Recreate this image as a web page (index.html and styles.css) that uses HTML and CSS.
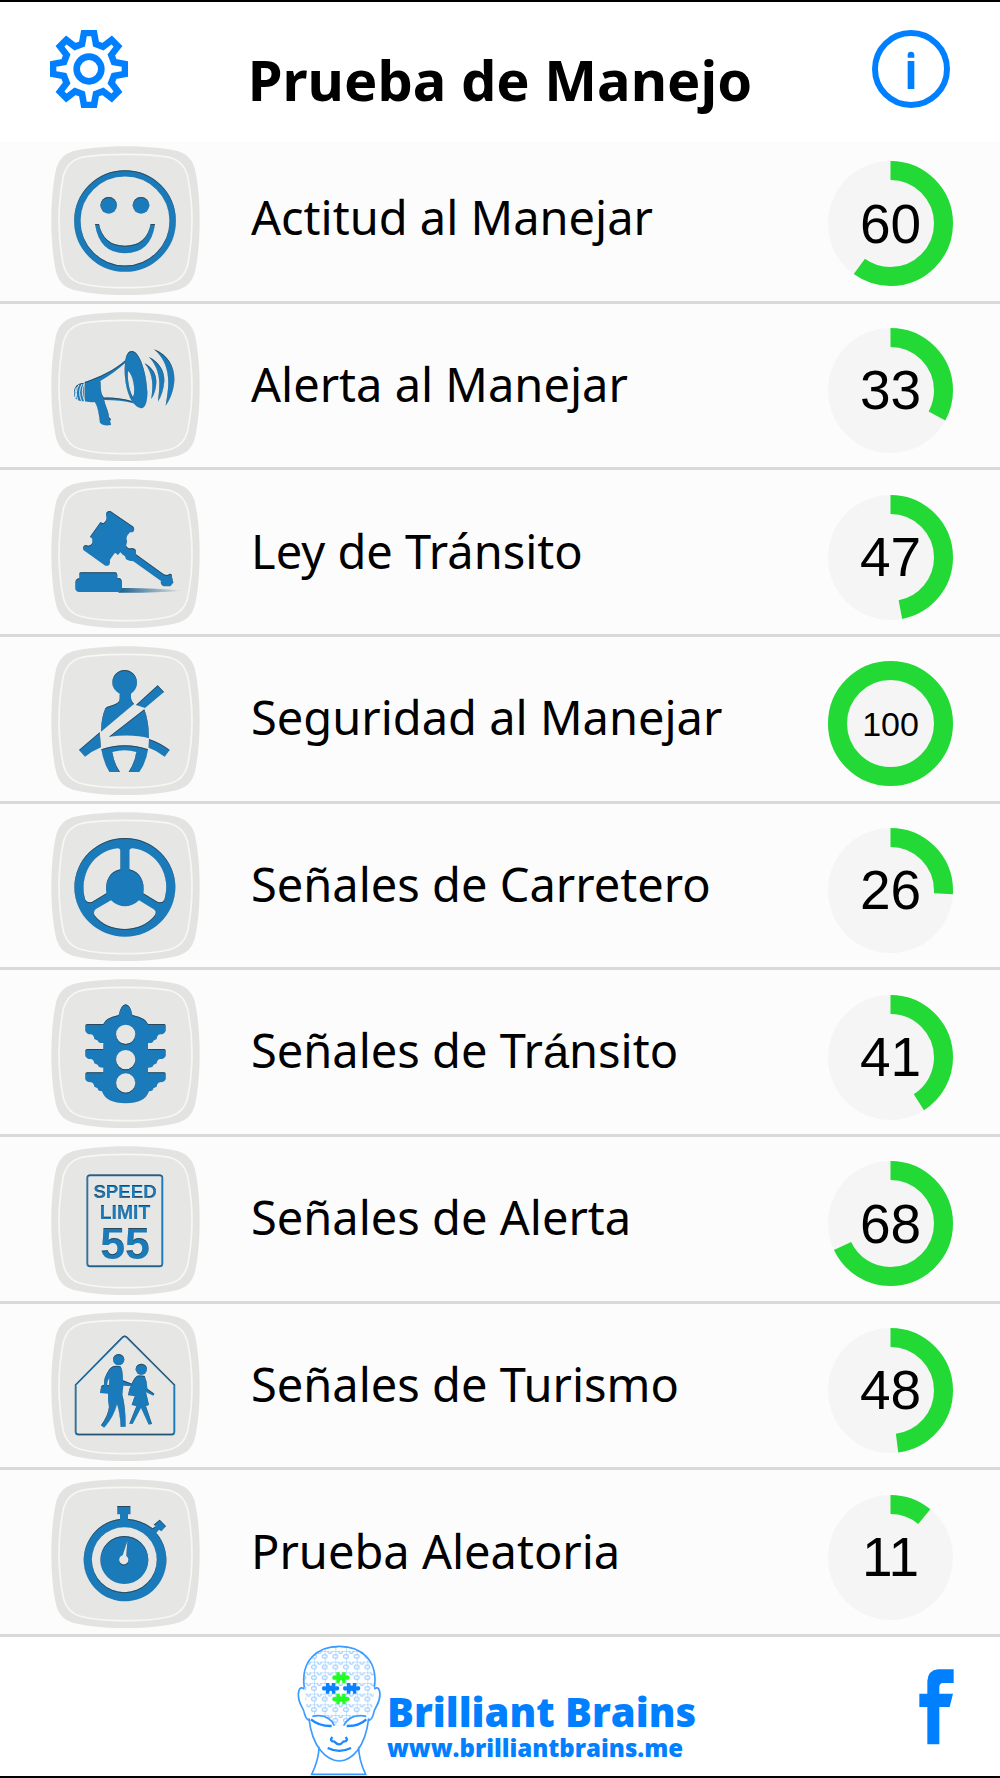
FILE: index.html
```html
<!DOCTYPE html>
<html lang="es">
<head>
<meta charset="utf-8">
<meta name="viewport" content="width=device-width, initial-scale=1">
<title>Prueba de Manejo</title>
<link rel="stylesheet" href="styles.css">
</head>
<body>
<svg class="defs" aria-hidden="true">
  <defs>
    <symbol id="tile" viewBox="0 0 447 447">
      <path fill="#e3e3e2" d="M224 1C290 1 350 8 382 16Q420 28 431 66C441 110 446 165 446 224C446 283 441 338 431 381Q420 420 382 431C350 440 290 447 224 447C158 447 98 440 65 431Q27 420 16 381C6 338 1 283 1 224C1 165 6 110 16 66Q27 28 65 16C98 8 158 1 224 1Z"/>
      <path fill="#e6e6e5" stroke="#f7f7f6" stroke-width="5" d="M224 25C285 25 335 29 362 36Q397 48 409 86C418 130 423 175 423 224C423 273 418 318 409 361Q397 400 362 411C335 419 285 425 224 425C162 425 112 419 85 411Q50 400 38 361C29 318 24 273 24 224C24 175 29 130 38 86Q50 48 85 36C112 29 162 25 224 25Z"/>
    </symbol>
    <filter id="engrave" x="-5%" y="-5%" width="110%" height="110%" color-interpolation-filters="sRGB">
      <feOffset in="SourceAlpha" dx="0" dy="3" result="o"/>
      <feGaussianBlur in="o" stdDeviation="2" result="b"/>
      <feComposite in="SourceAlpha" in2="b" operator="out" result="edge"/>
      <feFlood flood-color="#33342f" flood-opacity="0.7"/>
      <feComposite in2="edge" operator="in" result="dark"/>
      <feMerge><feMergeNode in="SourceGraphic"/><feMergeNode in="dark"/></feMerge>
    </filter>
    <pattern id="puzzle" x="165" y="92" width="32" height="32" patternUnits="userSpaceOnUse">
      <path fill="none" stroke="#8cc4ff" stroke-width="3" d="M0 0H12Q9 7 16 7Q23 7 20 0H32M0 0V12Q7 9 7 16Q7 23 0 20V32M32 12Q25 9 25 16Q25 23 32 20"/>
    </pattern>
    <path id="piece" d="M-14 -16H-4V-10Q0 -4 4 -10V-16H14V-5Q26 -9 26 0Q26 9 14 5V16H4V10Q0 4 -4 10V16H-14V5Q-26 9 -26 0Q-26 -9 -14 -5Z"/>
  </defs>
</svg>

<header class="top">
  <button class="icon-button" type="button" aria-label="Ajustes">
    <svg viewBox="-117 -117 234 234" fill="none" stroke="currentColor" stroke-width="20">
      <path d="M-15 -108H15L21 -75L42 -67L68 -87L87 -68L67 -42L75 -21L108 -15V15L75 21L67 42L87 68L68 87L42 67L21 75L15 108H-15L-21 75L-42 67L-68 87L-87 68L-67 42L-75 21L-108 15V-15L-75 -21L-67 -42L-87 -68L-68 -87L-42 -67L-21 -75Z"/>
      <circle r="37"/>
    </svg>
  </button>
  <h1 class="title">Prueba de Manejo</h1>
  <button class="icon-button" type="button" aria-label="Información">
    <svg viewBox="-117 -117 234 234">
      <circle r="108" fill="none" stroke="currentColor" stroke-width="18"/>
      <path fill="currentColor" d="M-10 -24H10V60H-10ZM-10 -34V-42Q-10 -52 0 -52Q10 -52 10 -42V-34Z"/>
    </svg>
  </button>
</header>

<main class="main">
<ul class="topics">
  <li><a class="topic" href="#actitud">
    <svg class="tile" viewBox="153 437 447 447" aria-hidden="true">
      <use href="#tile" x="153" y="437" width="447" height="447"/>
      <g class="ink">
        <circle cx="375" cy="662" r="143" fill="none" stroke="#1b7ab9" stroke-width="19"/>
        <circle cx="326" cy="615" r="25"/><circle cx="423" cy="615" r="25"/>
        <path d="M285 671H297Q310 736 375 736Q440 736 452 671H465Q453 759 375 759Q298 759 285 671Z"/>
      </g>
    </svg>
    <span class="name">Actitud al Manejar</span>
    <span class="score"><svg viewBox="0 0 125 125" aria-hidden="true"><circle class="disc" cx="62.5" cy="62.5" r="62.5"/><circle class="arc" cx="62.5" cy="62.5" r="53" pathLength="100" stroke-dasharray="60 100"/></svg><span>60</span></span>
  </a></li>

  <li><a class="topic" href="#alerta">
    <svg class="tile" viewBox="33 36 447 447" aria-hidden="true">
      <use href="#tile" x="33" y="36" width="447" height="447"/>
      <g class="ink">
        <path fill-rule="evenodd" d="M134 246C175 233 225 210 256 181C259 163 265 153 277 153C300 156 320 220 322 277C322 306 316 326 303 325C294 324 286 316 280 310C255 303 225 300 193 300C196 320 206 333 207 352L213 358L210 364L213 375C199 378 186 376 180 368C177 345 174 320 164 306C150 308 138 305 134 303ZM181 243C184 262 180 281 192 293C222 292 250 296 275 303C259 276 251 228 255 190C233 210 207 228 181 243ZM264 213C262 240 267 270 279 292C288 275 280 225 264 213Z"/>
        <path d="M131 249C112 250 102 261 102 279C102 296 112 304 131 304Z"/>
        <path d="M342 148C385 164 404 202 403 240C402 270 391 298 377 317C390 250 392 192 342 148Z"/>
        <path d="M327 171C358 186 374 213 373 243C371 268 365 288 354 305C361 252 363 212 327 171Z"/>
        <path d="M314 190C338 203 350 224 349 248C348 268 343 284 334 297C339 258 341 225 314 190Z"/>
      </g>
      <path fill="none" stroke="#dfe6e9" stroke-width="3" d="M126 252Q112 276 125 304M117 254Q103 276 114 302M109 262Q103 276 107 294M133 250Q120 275 134 303"/>
    </svg>
    <span class="name">Alerta al Manejar</span>
    <span class="score"><svg viewBox="0 0 125 125" aria-hidden="true"><circle class="disc" cx="62.5" cy="62.5" r="62.5"/><circle class="arc" cx="62.5" cy="62.5" r="53" pathLength="100" stroke-dasharray="33 100"/></svg><span>33</span></span>
  </a></li>

  <li><a class="topic" href="#ley">
    <svg class="tile" viewBox="33 536 447 447" aria-hidden="true">
      <defs><linearGradient id="shade"><stop stop-color="#1b5f8b"/><stop offset="1" stop-color="#1b5f8b" stop-opacity="0"/></linearGradient></defs>
      <use href="#tile" x="33" y="536" width="447" height="447"/>
      <path fill="url(#shade)" d="M240 863Q340 862 430 871Q340 878 235 877Z"/>
      <g class="ink">
        <path d="M198 645Q197 632 211 632L280 679Q286 689 278 696H270Q254 712 261 724L258 736Q264 746 273 744Q288 742 288 755V762L367 819Q378 828 390 820Q397 821 396 831L400 847L391 858H370Q360 852 363 842L280 783Q268 783 258 777Q256 765 249 764L241 756L234 764L225 757L215 771Q207 779 210 787Q207 799 196 796L130 749Q126 738 137 734Q150 740 157 728V716L150 709L181 666L190 669Q203 661 198 645Z"/>
        <path d="M118 820Q118 816 124 816H226Q232 816 232 824V834H240Q246 838 246 846V864Q243 875 234 875H116Q106 873 106 862V845Q108 835 118 834Z"/>
      </g>
    </svg>
    <span class="name">Ley de Tránsito</span>
    <span class="score"><svg viewBox="0 0 125 125" aria-hidden="true"><circle class="disc" cx="62.5" cy="62.5" r="62.5"/><circle class="arc" cx="62.5" cy="62.5" r="53" pathLength="100" stroke-dasharray="47 100"/></svg><span>47</span></span>
  </a></li>

  <li><a class="topic" href="#seguridad">
    <svg class="tile" viewBox="33 32 447 447" aria-hidden="true">
      <use href="#tile" x="33" y="32" width="447" height="447"/>
      <g class="ink">
        <path d="M254 104C275 104 291 121 291 142C291 158 283 167 273 175V189Q274 199 282 206L183 289Q183 250 196 219Q200 213 212 211Q240 205 239 189V175C227 167 217 158 217 142C217 121 233 104 254 104Z"/>
        <path d="M353 150L372 170L315 218L288 209Z"/>
        <path d="M313 222Q327 260 327 309Q280 295 207 304Z"/>
        <path d="M179 291L183 336Q155 348 135 364L117 344Z"/>
        <path d="M327 311Q360 322 389 344L374 364Q350 345 326 337Z"/>
        <path d="M184 342Q254 318 324 342Q319 380 298 410H266Q285 380 289 350Q254 339 217 350Q222 385 240 410H208Q190 380 184 342Z"/>
      </g>
    </svg>
    <span class="name">Seguridad al Manejar</span>
    <span class="score full"><svg viewBox="0 0 125 125" aria-hidden="true"><circle class="disc" cx="62.5" cy="62.5" r="62.5"/><circle class="arc" cx="62.5" cy="62.5" r="53"/></svg><span>100</span></span>
  </a></li>

  <li><a class="topic" href="#carretero">
    <svg class="tile" viewBox="33 531 447 447" aria-hidden="true">
      <use href="#tile" x="33" y="531" width="447" height="447"/>
      <g class="ink">
        <path fill-rule="evenodd" d="M255 609A151 148 0 0 1 406 757A151 148 0 0 1 255 905A151 148 0 0 1 103 757A151 148 0 0 1 255 609ZM233 640Q241 640 241 650V703C207 709 194 742 199 775L157 800Q144 806 136 795C115 725 157 648 233 640ZM278 640C352 648 396 725 373 795Q366 806 352 800L310 775C316 742 300 709 268 703V650Q268 640 278 640ZM213 796C239 820 271 820 297 796L340 822Q351 830 345 840C305 896 203 896 163 840Q159 830 168 822Z"/>
      </g>
    </svg>
    <span class="name">Señales de Carretero</span>
    <span class="score"><svg viewBox="0 0 125 125" aria-hidden="true"><circle class="disc" cx="62.5" cy="62.5" r="62.5"/><circle class="arc" cx="62.5" cy="62.5" r="53" pathLength="100" stroke-dasharray="26 100"/></svg><span>26</span></span>
  </a></li>

  <li><a class="topic" href="#transito">
    <svg class="tile" viewBox="33 26 447 447" aria-hidden="true">
      <use href="#tile" x="33" y="26" width="447" height="447"/>
      <g class="ink">
        <path fill-rule="evenodd" d="M257 102Q272 104 277 134Q316 142 324 161H372Q377 161 377 167V181Q374 192 360 192Q351 194 350 206L340 211Q340 219 324 218V236H372Q377 236 377 242V256Q374 266 360 266Q351 268 350 279L340 284Q340 292 324 292V306H372Q377 306 377 312V326Q374 336 360 336Q351 338 350 349L340 354Q340 363 327 363Q315 399 257 399Q198 399 186 363Q173 363 173 354L163 349Q162 338 153 336Q139 336 136 326V312Q136 306 142 306H190V292Q174 292 174 284L163 279Q162 268 153 266Q139 266 136 256V242Q136 236 142 236H190V218Q174 219 174 211L163 206Q162 194 153 192Q139 192 136 181V167Q136 161 142 161H190Q198 142 236 134Q242 104 257 102ZM257 163A29 29 0 0 0 257 221A29 29 0 0 0 257 163ZM257 239A29 29 0 0 0 257 297A29 29 0 0 0 257 239ZM257 309A29 29 0 0 0 257 367A29 29 0 0 0 257 309Z"/>
      </g>
    </svg>
    <span class="name">Señales de Tr<span class="accent">á</span>nsito</span>
    <span class="score"><svg viewBox="0 0 125 125" aria-hidden="true"><circle class="disc" cx="62.5" cy="62.5" r="62.5"/><circle class="arc" cx="62.5" cy="62.5" r="53" pathLength="100" stroke-dasharray="41 100"/></svg><span>41</span></span>
  </a></li>

  <li><a class="topic" href="#senales-alerta">
    <svg class="tile" viewBox="33 526 447 447" aria-hidden="true">
      <use href="#tile" x="33" y="526" width="447" height="447"/>
      <g class="ink">
        <rect x="142" y="614" width="225" height="273" rx="8" fill="none" stroke="#1b7ab9" stroke-width="5"/>
        <g class="sign" text-anchor="middle">
          <text x="255" y="682" font-size="56">SPEED</text>
          <text x="255" y="746" font-size="58">LIMIT</text>
          <text x="255" y="865" font-size="134">55</text>
        </g>
      </g>
    </svg>
    <span class="name">Señales de Alerta</span>
    <span class="score"><svg viewBox="0 0 125 125" aria-hidden="true"><circle class="disc" cx="62.5" cy="62.5" r="62.5"/><circle class="arc" cx="62.5" cy="62.5" r="53" pathLength="100" stroke-dasharray="68 100"/></svg><span>68</span></span>
  </a></li>

  <li><a class="topic" href="#turismo">
    <svg class="tile" viewBox="33 37 447 447" aria-hidden="true">
      <use href="#tile" x="33" y="37" width="447" height="447"/>
      <g class="ink">
        <path fill="none" stroke="#1b7ab9" stroke-width="5" d="M107 256L247 114Q254 106 261 114L403 256V397Q403 405 395 405H116Q107 405 107 397Z"/>
        <circle cx="236" cy="180" r="17"/>
        <path d="M223 199Q232 197 241 200Q248 206 249 242L276 252V260L250 258L247 285Q257 320 257 381L242 382Q240 340 231 314Q222 350 197 379L192 384L183 377Q204 348 207 322Q203 305 204 282L180 280L184 259L192 255Q190 236 206 212Q212 201 223 199ZM208 236Q200 246 201 255L207 257Z"/>
        <circle cx="304" cy="209" r="17"/>
        <path d="M292 228Q302 225 314 229Q321 244 322 267L343 282L340 288L318 278L327 316L318 320L336 373L326 375L303 325L278 373L268 372L289 320L275 316L284 290L264 287L268 269L272 259Q281 234 292 228Z"/>
      </g>
    </svg>
    <span class="name">Señales de Turismo</span>
    <span class="score"><svg viewBox="0 0 125 125" aria-hidden="true"><circle class="disc" cx="62.5" cy="62.5" r="62.5"/><circle class="arc" cx="62.5" cy="62.5" r="53" pathLength="100" stroke-dasharray="48 100"/></svg><span>48</span></span>
  </a></li>

  <li><a class="topic" href="#aleatoria">
    <svg class="tile" viewBox="33 537 447 447" aria-hidden="true">
      <use href="#tile" x="33" y="537" width="447" height="447"/>
      <g class="ink">
        <path fill-rule="evenodd" d="M232 618H271V643H264V657Q305 660 338 685L347 679L341 674L359 659L378 679L364 694L357 689L349 699A124 124 0 1 1 240 657V643H232ZM253 682A97 97 0 0 0 253 877A97 97 0 0 0 253 682Z"/>
        <path fill-rule="evenodd" d="M253 708A71 71 0 0 1 253 852A71 71 0 0 1 253 708ZM262 724L248 766A14 14 0 1 0 259 768Z"/>
      </g>
    </svg>
    <span class="name">Prueba Aleatoria</span>
    <span class="score"><svg viewBox="0 0 125 125" aria-hidden="true"><circle class="disc" cx="62.5" cy="62.5" r="62.5"/><circle class="arc" cx="62.5" cy="62.5" r="53" pathLength="100" stroke-dasharray="11 100"/></svg><span>11</span></span>
  </a></li>
</ul>
</main>

<footer class="bottom">
  <a class="brand" href="#brilliantbrains">
    <svg class="head" viewBox="50 42 252 393" fill="none" stroke="#3b9bff" stroke-width="5" aria-hidden="true">
      <path fill="url(#puzzle)" stroke="none" d="M72 170C60 90 110 46 177 46C245 46 294 90 282 170L275 250Q220 250 190 284H165Q135 250 80 250Z"/>
      <path d="M72 170C60 90 110 46 177 46C245 46 294 90 282 170M72 174Q56 162 54 190C54 225 70 225 73 250Q78 266 86 268M282 174Q297 162 299 190C298 225 282 225 279 250Q275 266 265 268M86 262C95 350 140 389 177 390C214 389 255 350 265 262M116 347C116 380 106 405 94 430H256C244 405 235 380 235 347M96 256Q145 246 162 284M258 256Q210 246 190 284"/>
      <path stroke-width="7" stroke="#1a8aff" d="M92 265Q116 286 154 285M258 265Q236 286 199 285M156 318Q146 330 162 332Q177 348 189 332Q206 330 196 318M142 351Q177 368 212 351"/>
      <g stroke="none"><use href="#piece" x="182" y="140" fill="#1fff1f"/><use href="#piece" x="182" y="204" fill="#1fff1f"/><use href="#piece" x="151" y="172" fill="#0a80ff"/><use href="#piece" x="214" y="172" fill="#0a80ff"/></g>
    </svg>
    <span class="brand-text"><strong>Brilliant Brains</strong><span>www.brilliantbrains.me</span></span>
  </a>
  <a class="facebook" href="#facebook" aria-label="Facebook">
    <svg viewBox="358 568 105 228" aria-hidden="true"><path fill="currentColor" d="M462 569V610H430Q419 611 419 622V642H460L450 682H419V794H383V682H359V642H383V604Q385 572 415 569Z"/></svg>
  </a>
</footer>
</body>
</html>
```
FILE: styles.css
```css
* {
  box-sizing: border-box;
}

body {
  margin: 0;
  min-height: 100vh;
  display: flex;
  flex-direction: column;
  background: #fff;
  color: #000;
  font-family: "Noto Sans", "Open Sans", sans-serif;
}

a {
  color: inherit;
  text-decoration: none;
}

svg {
  display: block;
}

.defs {
  position: absolute;
  width: 0;
  height: 0;
}

.top {
  height: 137px;
  padding: 28px 50px 0;
  border-top: 2px solid #000;
  display: flex;
  justify-content: space-between;
  align-items: flex-start;
}

.icon-button {
  width: 78px;
  height: 78px;
  padding: 0;
  border: 0;
  background: none;
  color: #0080ff;
  cursor: pointer;
}

.title {
  margin: 9px 0 0;
  font-size: 56px;
  line-height: 80px;
  font-weight: 700;
}

.main {
  flex: 1;
  display: flex;
}

.topics {
  flex: 1;
  margin: 0;
  padding: 0;
  list-style: none;
  display: grid;
  grid-auto-rows: 1fr;
  background: linear-gradient(#fff 5px, #fcfcfc 5px);
}

.topics li {
  display: grid;
}

.topic {
  display: flex;
  align-items: center;
  padding: 3px 47px 0 51px;
  border-bottom: 3px solid #d9d9d9;
}

.tile {
  width: 149px;
  height: 149px;
  flex: none;
}

.ink {
  fill: #1b7ab9;
  filter: url(#engrave);
}

.sign {
  font-family: "Liberation Sans", Arial, sans-serif;
  font-weight: 700;
}

.name {
  flex: 1;
  padding: 0 0 6px 51px;
  font-size: 47px;
  line-height: 64px;
  white-space: nowrap;
}

.accent {
  font-family: "Liberation Sans", Arial, sans-serif;
}

.score {
  width: 125px;
  height: 125px;
  flex: none;
  margin-top: 7px;
  display: grid;
  place-items: center;
  font-family: "Liberation Sans", Arial, sans-serif;
  font-size: 55px;
  line-height: 60px;
}

.score > * {
  grid-area: 1 / 1;
}

.score svg {
  width: 125px;
  height: 125px;
}

.full {
  font-size: 34px;
}

.disc {
  fill: #f5f5f5;
}

.arc {
  fill: none;
  stroke: #22d935;
  stroke-width: 19;
  transform: rotate(-90deg);
  transform-origin: center;
}

.bottom {
  height: 141px;
  padding: 0 46px 0 297px;
  border-bottom: 2px solid #000;
  display: flex;
  justify-content: space-between;
  align-items: center;
  color: #0080ff;
}

.brand {
  align-self: flex-end;
  display: flex;
  align-items: flex-end;
  gap: 6px;
}

.head {
  width: 84px;
  height: 131px;
}

.brand-text {
  display: flex;
  flex-direction: column;
  padding-bottom: 14px;
  font-family: "Open Sans", "Noto Sans", sans-serif;
  font-weight: 800;
  font-size: 24px;
  line-height: 28px;
}

.brand-text strong {
  font-size: 40px;
  line-height: 44px;
  font-weight: 800;
}

.facebook svg {
  width: 35px;
  height: 76px;
}
```
